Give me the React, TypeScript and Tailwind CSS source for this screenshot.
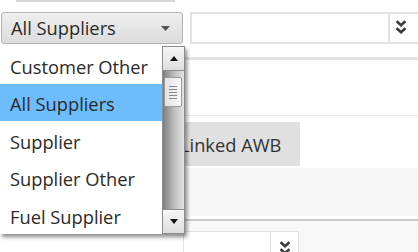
import React from 'react';

const options = ['Customer Other', 'All Suppliers', 'Supplier', 'Supplier Other', 'Fuel Supplier'];

function DoubleChevron() {
  return (
    <svg width="10" height="16" viewBox="0 0 10 16" fill="none" stroke="#3c3c3c" strokeWidth="2.6" strokeLinecap="square">
      <path d="M1.5 2 L5 5.2 L8.5 2" />
      <path d="M1.5 9 L5 12.2 L8.5 9" />
    </svg>
  );
}

function ScrollButton({ up }: { up?: boolean }) {
  return (
    <div className="h-[25px] shrink-0 flex items-center justify-center border border-[#8c8c8c] bg-gradient-to-b from-[#f6f6f6] to-[#dedede]">
      <svg width="8" height="5" viewBox="0 0 8 5">
        <polygon points={up ? '0,5 8,5 4,0' : '0,0 8,0 4,5'} fill="#111" />
      </svg>
    </div>
  );
}

export default function App() {
  return (
    <div className="relative w-[418px] h-[252px] overflow-hidden bg-white font-['Open_Sans',sans-serif] text-[#2a2a2a]">
      <div className="ml-4 w-[159px] h-[2px] bg-[#d6d6d6]" />

      <div className="mt-[10px] flex h-8">
        <div className="ml-px w-[182px] shrink-0 flex items-center rounded-[3px] border border-[#b3b3b3] bg-gradient-to-b from-[#efefef] to-[#dcdcdc] pl-[9px] pr-[12px] text-[18.3px]">
          <span>All Suppliers</span>
          <svg className="ml-auto" width="9" height="5" viewBox="0 0 9 5">
            <polygon points="0,0 9,0 4.5,5" fill="#555" />
          </svg>
        </div>
        <div className="ml-[7px] w-[240px] shrink-0 flex border-2 border-[#e3e3e3] bg-white">
          <div className="w-[196px] shrink-0" />
          <div className="flex-1 flex items-center pl-[6px] border-l-2 border-[#e3e3e3]">
            <DoubleChevron />
          </div>
        </div>
      </div>

      <div className="mt-[13px] ml-[185px] h-[3px] bg-[#e3e3e3]" />
      <div className="mt-[55px] ml-[185px] h-px bg-[#e6e6e6]" />

      <div className="mt-[6px] ml-[165px] w-[135px] h-[44px] flex items-center pl-[15px] pt-[2px] bg-[#e0e0e0] text-[18.3px] text-[#333]">
        Linked AWB
      </div>
      <div className="mt-[2px] ml-[185px] h-[48px] bg-[#f7f7f7]" />
      <div className="mt-[3px] ml-[185px] h-[2px] bg-[#c9c9c9]" />
      <div className="ml-[185px] h-[40px] bg-[#f8f8f8] pt-[10px]">
        <div className="-ml-[2px] w-[116px] h-[40px] flex border border-[#e0e0e0] bg-white">
          <div className="w-[86px] shrink-0" />
          <div className="flex-1 flex justify-center pt-[9px] border-l border-[#e0e0e0]">
            <DoubleChevron />
          </div>
        </div>
      </div>

      <div className="absolute left-0 top-[46px] w-[185px] h-[188px] flex bg-white shadow-[2px_3px_4px_rgba(0,0,0,0.45)]">
        <div className="flex-1 flex flex-col">
          {options.map((o) => (
            <div
              key={o}
              className={`h-[37.6px] flex items-center pl-[10px] pt-[3px] text-[18.3px] ${o === 'All Suppliers' ? 'bg-[#6dbdfc]' : ''}`}
            >
              {o}
            </div>
          ))}
        </div>
        <div className="w-[23px] shrink-0 flex flex-col">
          <ScrollButton up />
          <div className="relative flex-1 border-x border-[#8c8c8c] bg-gradient-to-r from-[#7e7e7e] via-[#bcbcbc] to-[#e4e4e4]">
            <div className="absolute left-px right-[2px] top-[6px] h-[30px] flex flex-col items-center justify-center gap-[2px] rounded-[2px] border border-[#9a9a9a] bg-gradient-to-r from-[#e4e4e4] to-[#f8f8f8]">
              {[0, 1, 2, 3, 4].map((i) => (
                <div key={i} className="w-[8px] h-px bg-[#8a8a8a]" />
              ))}
            </div>
          </div>
          <ScrollButton />
        </div>
      </div>
    </div>
  );
}
